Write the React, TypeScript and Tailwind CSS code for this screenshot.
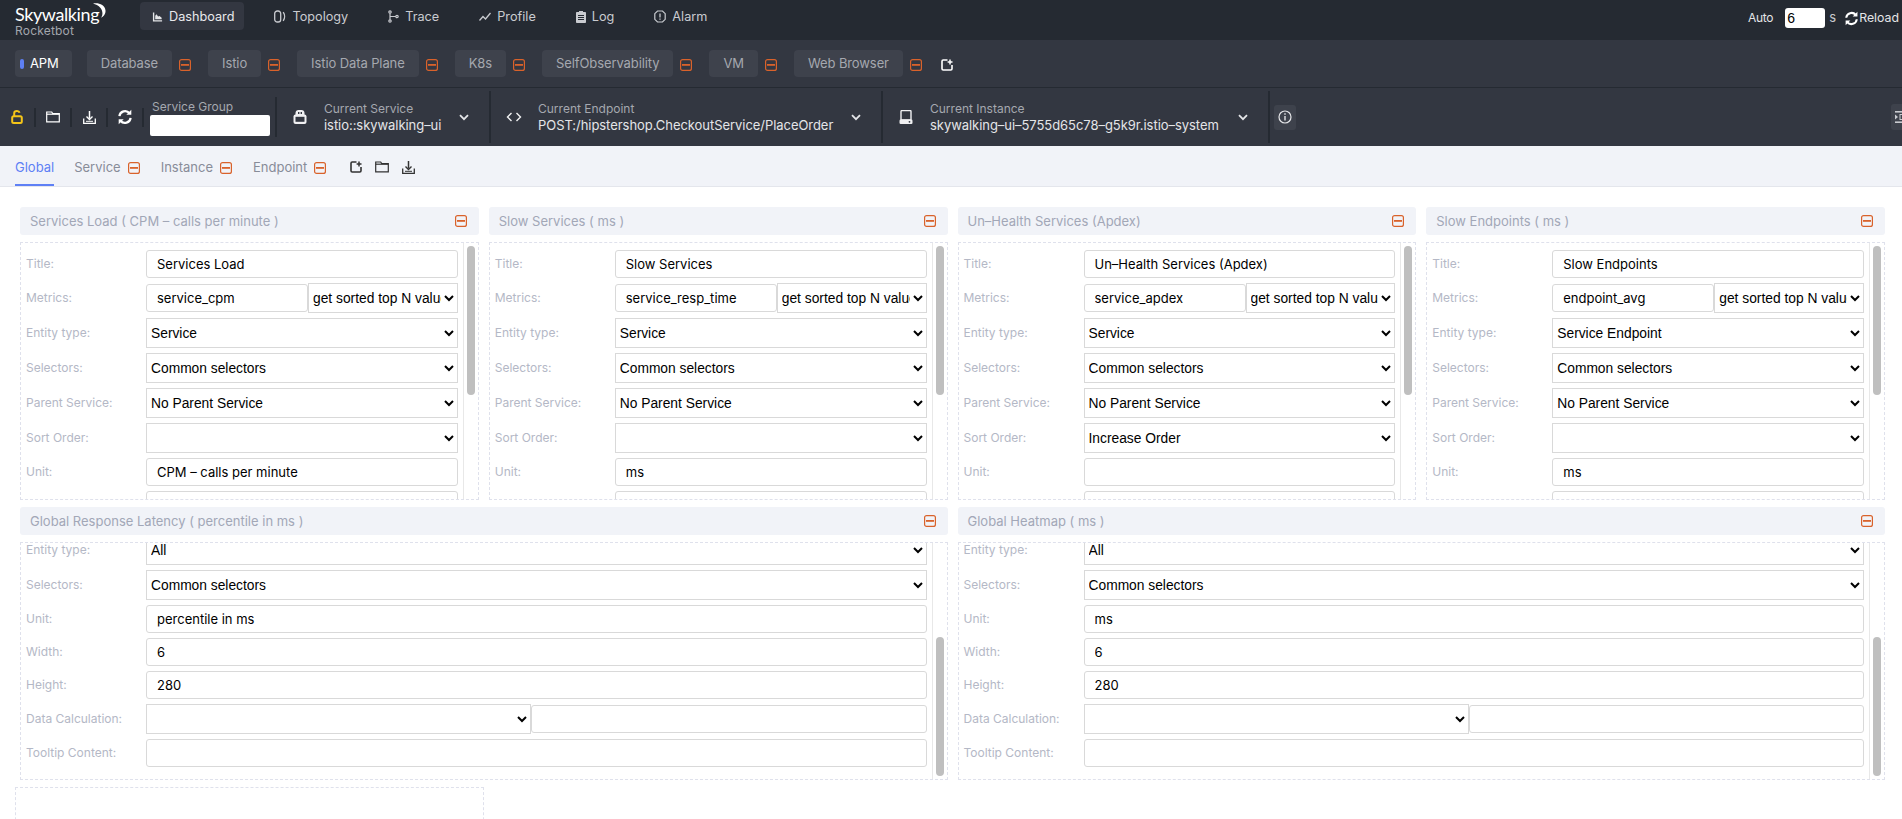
const sans = "[font-family:Inter,'Noto_Sans',sans-serif]";

function Minus({ className = "" }: { className?: string }) {
  return (
    <svg width="12" height="12" viewBox="0 0 12 12" className={"shrink-0 " + className}>
      <rect x="0.6" y="0.6" width="10.8" height="10.8" rx="2" fill="none" stroke="#d9622b" strokeWidth="1.2" />
      <rect x="2" y="5" width="8" height="1.8" fill="#d9622b" />
    </svg>
  );
}

function AddBox({ color = "#fff" }: { color?: string }) {
  return (
    <svg width="12" height="12" viewBox="0 0 12 12" className="shrink-0" fill="none" stroke={color}>
      <path d="M6.5 1H2.2C1.500 1 1 1.500 1 2.200v7.600c0 .7.500 1.200 1.200 1.200h7.600c.7 0 1.200-.5 1.200-1.200V6" strokeWidth="1.6" />
      <path d="M9 0.500v5M6.600 3h4.900" strokeWidth="1.500" />
    </svg>
  );
}

function Folder({ color = "#fff", w = 14 }: { color?: string; w?: number }) {
  return (
    <svg width={w} height="12" viewBox="0 0 14 12" className="shrink-0" fill="none" stroke={color} strokeWidth="1.2">
      <path d="M.7 10.900V1h5l1 1.600h6.600v8.300z" />
      <path d="M.7 3.200h12.600" />
    </svg>
  );
}

function Download({ color = "#fff" }: { color?: string }) {
  return (
    <svg width="13" height="13" viewBox="0 0 13 13" className="shrink-0" fill="none" stroke={color}>
      <path d="M.7 7.500v4.800h11.600V7.500" strokeWidth="1.3" />
      <path d="M6.500 0v7.500" strokeWidth="1.500" />
      <path d="M3.500 5.500l3 3 3-3" strokeWidth="1.400" />
      <path d="M3 10.300h7" strokeWidth="1" />
    </svg>
  );
}

function Sync({ size = 14 }: { size?: number }) {
  return (
    <svg width={size} height={size} viewBox="0 0 16 16" className="shrink-0" fill="none" stroke="#fff" strokeWidth="2.2">
      <path d="M2.400 7.200A5.700 5.700 0 0 1 12.500 4.200" />
      <path d="M13.600 8.800A5.700 5.700 0 0 1 3.500 11.800" />
      <path d="M14.300 0.800v5h-5z" fill="#fff" stroke="none" />
      <path d="M1.700 15.200v-5h5z" fill="#fff" stroke="none" />
    </svg>
  );
}

function Chevron() {
  return (
    <svg width="10" height="7" viewBox="0 0 10 7" className="ml-auto shrink-0" fill="none" stroke="#e4e5e8" strokeWidth="1.8">
      <path d="M1 1.200l4 4 4-4" />
    </svg>
  );
}

const navIcons: Record<string, React.ReactNode> = {
  Dashboard: (
    <svg width="11" height="12" viewBox="0 0 12 12" fill="#e4e5e8" className="shrink-0">
      <path d="M1 1h1.500v8.500H11V11H1z" />
      <path d="M3.500 8.500V4.500L5 3l1.600 2.400L8.200 5l2.300 1.800v1.700z" />
    </svg>
  ),
  Topology: (
    <svg width="12" height="13" viewBox="0 0 12 13" fill="none" stroke="#c9cbd0" className="shrink-0">
      <rect x="0.700" y="1" width="6" height="11" rx="2.600" strokeWidth="1.300" />
      <path d="M9.200 2.200c1.800 2.400 1.800 6.200 0 8.600" strokeWidth="1.400" />
    </svg>
  ),
  Trace: (
    <svg width="11" height="13" viewBox="0 0 11 13" fill="none" stroke="#c9cbd0" strokeWidth="1.2" className="shrink-0">
      <circle cx="2" cy="2" r="1.200" />
      <circle cx="2" cy="11" r="1.200" />
      <circle cx="9" cy="6.500" r="1.200" />
      <path d="M2 3.200v6.600M2 6.500h5.800" />
    </svg>
  ),
  Profile: (
    <svg width="12" height="10" viewBox="0 0 12 10" fill="none" stroke="#c9cbd0" strokeWidth="1.3" className="shrink-0">
      <path d="M.5 8.500l3.500-4 2.500 2.500L11.500 1" />
    </svg>
  ),
  Log: (
    <svg width="10" height="12" viewBox="0 0 10 12" className="shrink-0">
      <path d="M3 1V0h4v1h2.200c.4 0 .8.4.8.8v9.400c0 .4-.4.8-.8.8H.8c-.4 0-.8-.4-.8-.8V1.800C0 1.400.4 1 .8 1z" fill="#c9cbd0" />
      <path d="M2 4.500h6M2 6.500h6M2 8.500h6" stroke="#252a32" strokeWidth="1" />
    </svg>
  ),
  Alarm: (
    <svg width="12" height="13" viewBox="0 0 12 13" fill="none" stroke="#c9cbd0" className="shrink-0">
      <path d="M3.500 1h5L11.200 3.700v5.600L8.500 12h-5L.8 9.300V3.700z" strokeWidth="1.200" />
      <path d="M6 3.500v4M6 8.500v1.200" strokeWidth="1.300" />
    </svg>
  ),
};

function Nav({ name, active }: { name: string; active?: boolean }) {
  return (
    <div
      className={
        "flex h-[28px] items-center gap-[6px] rounded-[4px] pl-[12px] pr-[10px] pt-[1px] text-[12.7px] " +
        (active ? "bg-[#333741] text-[#e8e9ec]" : "text-[#c9cbd0]")
      }
    >
      {navIcons[name]}
      <span>{name}</span>
    </div>
  );
}

function TopBar() {
  return (
    <div className="flex h-[40px] shrink-0 items-start bg-[#252a32] pt-[2px]">
      <div className="relative ml-[15px] w-[125px] shrink-0">
        <div className="mt-[2px] h-[20px] text-[18px] leading-[20px] tracking-[-0.4px] text-white [font-family:Lato,sans-serif]">
          Skywalking
        </div>
        <div className="text-[12px] leading-[14px] tracking-[0.2px] text-[#a3a6ad]">Rocketbot</div>
        <svg width="14" height="15" viewBox="0 0 14 15" className="absolute left-[77px] top-[1px]">
          <path d="M1 .6C6-.6 13 1.500 13.500 7.500 13.800 11 11.500 14 9 14.800 11 12 11 8 8.500 5 6.500 2.700 3.500 1.300 1 .6z" fill="#fff" />
        </svg>
      </div>
      <div className="flex gap-[18px]">
        <Nav name="Dashboard" active />
        <Nav name="Topology" />
        <Nav name="Trace" />
        <Nav name="Profile" />
        <Nav name="Log" />
        <Nav name="Alarm" />
      </div>
      <div className="ml-auto mr-[3px] flex h-[30px] items-center pt-[2px] text-[13px] text-[#e4e5e8]">
        <span className="text-[12px] tracking-[-0.3px]">Auto</span>
        <input
          readOnly
          value="6"
          className="ml-[12px] h-[20px] w-[40px] rounded-[3px] bg-white pl-[2px] text-[14px] text-black [font-family:'Liberation_Sans',sans-serif]"
        />
        <span className="ml-[4px] w-[6px] text-[#c9cbd0]">s</span>
        <span className="ml-[9px]">
          <Sync size={15} />
        </span>
        <span className="text-[12.3px]">Reload</span>
      </div>
    </div>
  );
}

function DashTab({ name, active, gap = 17 }: { name: string; active?: boolean; gap?: number }) {
  return (
    <div className="flex items-center">
      <div
        className={
          "flex h-[27px] items-center rounded-[4px] bg-[#3e424c] text-[13px] tracking-[-0.1px] " +
          (active ? "gap-[6px] pl-[5px] pr-[13px] text-white" : "px-[14px] text-[#a5a8af]")
        }
      >
        {active && <span className="h-[10px] w-[4px] rounded-[2px] bg-[#5e80f5]" />}
        {name}
      </div>
      {!active && <Minus className="ml-[7px] mt-[2px]" />}
      <span style={{ width: gap }} />
    </div>
  );
}

function TabsBar() {
  return (
    <div className="flex h-[48px] shrink-0 items-center border-b border-b-[#252a32] bg-[#333741] pl-[15px]">
      <DashTab name="APM" active gap={15} />
      <DashTab name="Database" />
      <DashTab name="Istio" />
      <DashTab name="Istio Data Plane" />
      <DashTab name="K8s" />
      <DashTab name="SelfObservability" />
      <DashTab name="VM" />
      <DashTab name="Web Browser" />
      <span className="ml-[2px] mt-[2px]">
        <AddBox />
      </span>
    </div>
  );
}

function ToolCell({ children }: { children: React.ReactNode }) {
  return (
    <div className="flex h-[19px] w-[36px] shrink-0 items-center justify-center border-r-2 border-r-[#252a32]">
      {children}
    </div>
  );
}

function Selector({
  icon,
  label,
  value,
  width,
  pad,
}: {
  icon: React.ReactNode;
  label: string;
  value: string;
  width: number;
  pad: string;
}) {
  return (
    <div style={{ width }} className="flex h-[52px] shrink-0 items-center border-r-2 border-r-[#252a32] pr-[20px]">
      <div className={"flex w-[47px] shrink-0 justify-start " + pad}>{icon}</div>
      <div className="flex flex-col">
        <span className="text-[12px] leading-[16px] text-[#a5a8af]">{label}</span>
        <span className="whitespace-nowrap text-[13px] leading-[16px] tracking-[-0.05px] text-[#e4e5e8]">{value}</span>
      </div>
      <Chevron />
    </div>
  );
}

function ContextBar() {
  return (
    <div className="flex h-[58px] shrink-0 items-center overflow-hidden bg-[#333741]">
      <ToolCell>
        <svg width="12" height="14" viewBox="0 0 12 14" fill="none" stroke="#f5c518" strokeWidth="2">
          <rect x="1.200" y="6.200" width="9.600" height="6.800" rx="1.500" />
          <path d="M3.200 6V3.300C3.200 1.700 4.400 1 6 1c1.300 0 2.300.6 2.600 1.800" />
        </svg>
      </ToolCell>
      <ToolCell>
        <Folder />
      </ToolCell>
      <ToolCell>
        <Download />
      </ToolCell>
      <ToolCell>
        <Sync size={16} />
      </ToolCell>
      <div className="ml-[6px] flex w-[120px] shrink-0 flex-col">
        <span className="pl-[2px] text-[12px] leading-[17px] text-[#a5a8af]">Service Group</span>
        <input readOnly className="h-[21px] rounded-[2px] bg-white" />
      </div>
      <div className="ml-[5px] h-[40px] w-[2px] shrink-0 bg-[#252a32]" />
      <Selector
        width={214}
        pad="pl-[16px]"
        label="Current Service"
        value="istio::skywalking–ui"
        icon={
          <svg width="14" height="14" viewBox="0 0 14 14" fill="none">
            <path d="M2.500 5.500V3C2.500 1.200 3.800 0 5.500 0h3c1.700 0 3 1.200 3 3v2.500z" fill="#f0f0f2" />
            <rect x="0.500" y="4.500" width="13" height="9.500" rx="2" fill="#f0f0f2" />
            <rect x="2.500" y="6.800" width="9" height="5" fill="#333741" />
            <rect x="5" y="2" width="1.400" height="2" fill="#333741" />
            <rect x="7.600" y="2" width="1.400" height="2" fill="#333741" />
          </svg>
        }
      />
      <Selector
        width={392}
        pad="pl-[15px]"
        label="Current Endpoint"
        value="POST:/hipstershop.CheckoutService/PlaceOrder"
        icon={
          <svg width="16" height="12" viewBox="0 0 16 12" fill="none" stroke="#f0f0f2" strokeWidth="1.400">
            <path d="M5.500 2L1.500 6l4 4M10.500 2l4 4-4 4" />
          </svg>
        }
      />
      <Selector
        width={387}
        pad="pl-[16px]"
        label="Current Instance"
        value="skywalking–ui–5755d65c78–g5k9r.istio–system"
        icon={
          <svg width="14" height="15" viewBox="0 0 14 15" fill="none">
            <path d="M2 1.500C2 .8 2.500.5 3 .5h8c.5 0 1 .3 1 1V10H2z" stroke="#f0f0f2" strokeWidth="1.400" />
            <rect x="0.500" y="9.500" width="13" height="4.500" rx="1.200" fill="#f0f0f2" />
            <circle cx="10.500" cy="11.800" r="0.900" fill="#333741" />
          </svg>
        }
      />
      <div className="ml-[4px] flex h-[25px] w-[22px] shrink-0 items-center justify-center rounded-[3px] bg-[#3e424c]">
        <svg width="14" height="14" viewBox="0 0 14 14" fill="none" stroke="#e4e5e8" strokeWidth="1.200">
          <circle cx="7" cy="7" r="6" />
          <path d="M7 6v4.500M7 3.300v1.400" strokeWidth="1.400" />
        </svg>
      </div>
      <div className="ml-auto flex h-[26px] w-[11px] shrink-0 items-center justify-start overflow-hidden rounded-l-[3px] bg-[#3e424c] pl-[4px]">
        <svg width="14" height="12" viewBox="0 0 14 12" className="shrink-0" fill="#c9cbd0">
          <rect x="0" y="0" width="14" height="1.600" />
          <rect x="0" y="10.400" width="14" height="1.600" />
          <path d="M0 3.500L3 6 0 8.500z" />
          <rect x="5" y="3.500" width="9" height="5" fill="none" stroke="#c9cbd0" />
        </svg>
      </div>
    </div>
  );
}

function SubTab({ name, active }: { name: string; active?: boolean }) {
  if (active)
    return (
      <div className="flex h-full items-center border-b-[2px] border-b-[#5e80f5] pt-[5px] text-[13px] text-[#5e80f5]">
        {name}
      </div>
    );
  return (
    <div className="flex items-center gap-[7px] pt-[4px] text-[13px] text-[#888c98]">
      <span>{name}</span>
      <Minus />
    </div>
  );
}

function SubBar() {
  return (
    <div className="flex h-[41px] shrink-0 items-center border-b border-b-[#e4e6ec] bg-[#f1f3f8] pl-[15px]">
      <SubTab name="Global" active />
      <div className="ml-[20px] flex gap-[21px]">
        <SubTab name="Service" />
        <SubTab name="Instance" />
        <SubTab name="Endpoint" />
      </div>
      <div className="ml-[24px] flex items-center gap-[13px] pt-[2px]">
        <AddBox color="#333" />
        <Folder color="#333" />
        <Download color="#333" />
      </div>
    </div>
  );
}

const inputCls =
  "h-[28px] min-w-0 rounded-[3px] border border-[#d9d9d9] bg-white px-[10px] text-[13px] text-black " + sans;
const selectCls =
  "h-[30px] min-w-0 border border-[#d9d9d9] bg-white text-[13.8px] text-black [font-family:'Liberation_Sans',sans-serif]";

function Row({ label, children }: { label: string; children: React.ReactNode }) {
  return (
    <div className="mb-[5px] flex items-center">
      <div className="w-[120px] shrink-0 text-[12px] text-[#b4b8c6]">{label}</div>
      <div className="flex min-w-0 flex-1 items-center">{children}</div>
    </div>
  );
}

function TextField({ label, value = "" }: { label: string; value?: string }) {
  return (
    <Row label={label}>
      <input readOnly value={value} className={inputCls + " w-full"} />
    </Row>
  );
}

function SelectField({ label, value = "" }: { label: string; value?: string }) {
  return (
    <Row label={label}>
      <select className={selectCls + " w-full"}>
        <option>{value}</option>
      </select>
    </Row>
  );
}

function CardHead({ title }: { title: string }) {
  return (
    <div className="mb-[7px] flex h-[28px] items-center justify-between rounded-[3px] bg-[#f1f3f8] pl-[10px] pr-[12px] text-[13px] text-[#a2a7b7]">
      <span className="pt-[1px]">{title}</span>
      <Minus />
    </div>
  );
}

function Track({ thumb, bottom }: { thumb: string; bottom?: boolean }) {
  return (
    <div
      className={
        "flex w-[15px] shrink-0 flex-col border-l border-l-[#e8e8e8] py-[3px] pl-[3px] " +
        (bottom ? "justify-end" : "justify-start")
      }
    >
      <div className={"w-[8px] rounded-[4px] bg-[#bfbfbf] " + thumb} />
    </div>
  );
}

type TopCard = {
  head: string;
  title: string;
  metric: string;
  entity: string;
  order?: string;
  unit: string;
};

function TopWidget({ c }: { c: TopCard }) {
  return (
    <div className="min-w-0">
      <CardHead title={c.head} />
      <div className="flex h-[258px] border border-dashed border-[#dfe1ec]">
        <div className="min-w-0 flex-1 overflow-hidden px-[5px] pt-[7px]">
          <TextField label="Title:" value={c.title} />
          <Row label="Metrics:">
            <input readOnly value={c.metric} className={inputCls + " w-[162px] shrink-0"} />
            <select className={selectCls + " min-w-0 flex-1"}>
              <option>get sorted top N values</option>
            </select>
          </Row>
          <SelectField label="Entity type:" value={c.entity} />
          <SelectField label="Selectors:" value="Common selectors" />
          <SelectField label="Parent Service:" value="No Parent Service" />
          <SelectField label="Sort Order:" value={c.order} />
          <TextField label="Unit:" value={c.unit} />
          <TextField label="" />
        </div>
        <Track thumb="h-[149px]" />
      </div>
    </div>
  );
}

function WideWidget({ head, unit }: { head: string; unit: string }) {
  return (
    <div className="col-span-2 min-w-0">
      <CardHead title={head} />
      <div className="flex h-[238px] border border-dashed border-[#dfe1ec]">
        <div className="min-w-0 flex-1 overflow-hidden px-[5px]">
          <div className="-mt-[8px]">
            <SelectField label="Entity type:" value="All" />
            <SelectField label="Selectors:" value="Common selectors" />
            <TextField label="Unit:" value={unit} />
            <TextField label="Width:" value="6" />
            <TextField label="Height:" value="280" />
            <Row label="Data Calculation:">
              <select className={selectCls + " w-[385px] shrink-0"}>
                <option></option>
              </select>
              <input readOnly className={inputCls + " flex-1"} />
            </Row>
            <TextField label="Tooltip Content:" />
          </div>
        </div>
        <Track thumb="h-[139px]" bottom />
      </div>
    </div>
  );
}

const cards: TopCard[] = [
  {
    head: "Services Load ( CPM – calls per minute )",
    title: "Services Load",
    metric: "service_cpm",
    entity: "Service",
    unit: "CPM – calls per minute",
  },
  {
    head: "Slow Services ( ms )",
    title: "Slow Services",
    metric: "service_resp_time",
    entity: "Service",
    unit: "ms",
  },
  {
    head: "Un–Health Services (Apdex)",
    title: "Un–Health Services (Apdex)",
    metric: "service_apdex",
    entity: "Service",
    order: "Increase Order",
    unit: "",
  },
  {
    head: "Slow Endpoints ( ms )",
    title: "Slow Endpoints",
    metric: "endpoint_avg",
    entity: "Service Endpoint",
    unit: "ms",
  },
];

export default function App() {
  return (
    <div className={"flex h-screen flex-col overflow-hidden bg-white " + sans}>
      <TopBar />
      <TabsBar />
      <ContextBar />
      <SubBar />
      <div className="min-h-0 flex-1 overflow-hidden pl-[20px] pr-[17px] pt-[20px]">
        <div className="grid grid-cols-4 gap-x-[10px] gap-y-[7px]">
          {cards.map((c) => (
            <TopWidget key={c.head} c={c} />
          ))}
          <WideWidget head="Global Response Latency ( percentile in ms )" unit="percentile in ms" />
          <WideWidget head="Global Heatmap ( ms )" unit="ms" />
          <div className="-mx-[5px] h-[200px] border border-dashed border-[#dfe1ec]" />
        </div>
      </div>
    </div>
  );
}
